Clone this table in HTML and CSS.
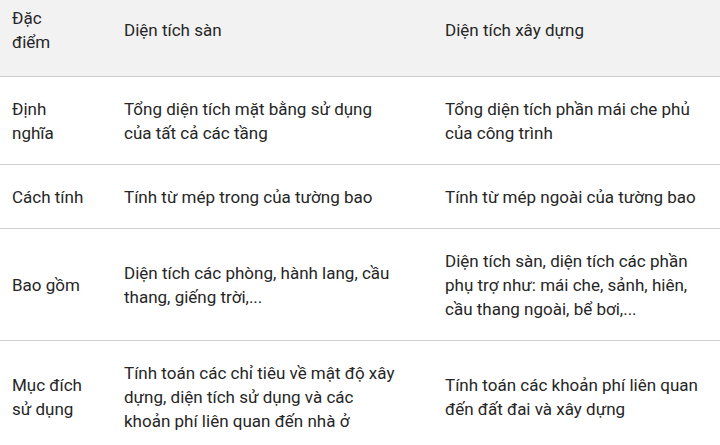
FILE: index.html
```html
<!DOCTYPE html>
<html lang="vi">
<head>
<meta charset="utf-8">
<link rel="stylesheet" href="styles.css">
</head>
<body>
<table class="cmp">
  <colgroup>
    <col class="c1">
    <col class="c2">
    <col class="c3">
  </colgroup>
  <thead>
    <tr>
      <th class="k">Đặc<br>điểm</th>
      <th class="m">Diện tích sàn</th>
      <th class="n">Diện tích xây dựng</th>
    </tr>
  </thead>
  <tbody>
    <tr>
      <td class="k">Định nghĩa</td>
      <td class="m">Tổng diện tích mặt bằng sử dụng của tất cả các tầng</td>
      <td class="n">Tổng diện tích phần mái che phủ của công trình</td>
    </tr>
    <tr>
      <td class="k">Cách tính</td>
      <td class="m">Tính từ mép trong của tường bao</td>
      <td class="n">Tính từ mép ngoài của tường bao</td>
    </tr>
    <tr>
      <td class="k">Bao gồm</td>
      <td class="m">Diện tích các phòng, hành lang, cầu thang, giếng trời,...</td>
      <td class="n">Diện tích sàn, diện tích các phần phụ trợ như: mái che, sảnh, hiên, cầu thang ngoài, bể bơi,...</td>
    </tr>
    <tr>
      <td class="k">Mục đích sử dụng</td>
      <td class="m">Tính toán các chỉ tiêu về mật độ xây dựng, diện tích sử dụng và các khoản phí liên quan đến nhà ở</td>
      <td class="n">Tính toán các khoản phí liên quan đến đất đai và xây dựng</td>
    </tr>
  </tbody>
</table>
</body>
</html>
```
FILE: styles.css
```css
html, body {
  margin: 0;
  padding: 0;
  background: #ffffff;
}
body {
  font-family: Roboto, "Noto Sans", Arial, sans-serif;
  font-size: 17px;
  line-height: 24px;
  color: #262626;
  overflow: hidden;
}
.cmp {
  width: 720px;
  border-collapse: collapse;
  table-layout: fixed;
}
.c1 { width: 112px; }
.c2 { width: 321px; }
.c3 { width: 287px; }
.cmp th,
.cmp td {
  text-align: left;
  font-weight: 400;
  vertical-align: middle;
  padding: 19.5px 12px;
  border-bottom: 1px solid #cfcfcf;
}
.cmp .k { padding-right: 28px; }
.cmp .m { padding-right: 36px; }
.cmp .n { padding-right: 20px; }
.cmp thead th {
  background: #f2f2f2;
  padding-top: 6px;
  padding-bottom: 22px;
}
```
